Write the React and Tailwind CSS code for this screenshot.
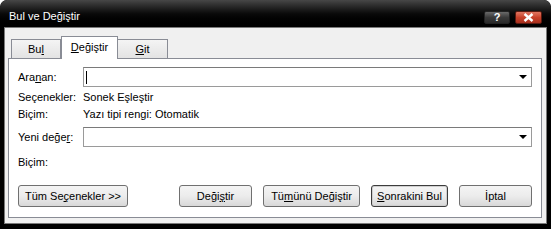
import React from "react";

function Btn({ children, className = "", def = false }) {
  return (
    <div
      className={
        "h-[22px] flex items-center justify-center rounded-[3px] text-[11px] text-black bg-gradient-to-b from-[#f4f4f4] via-[#ececec] to-[#d8d8d8] " +
        (def ? "border border-[#3c3c3c] shadow-[inset_0_0_0_1px_#cfcfcf] " : "border border-[#707070] ") +
        className
      }
    >
      {children}
    </div>
  );
}

function Combo({ cursor = false }) {
  return (
    <div className="flex-1 h-[20px] bg-white border border-[#9a9a9a] border-t-[#7a7a7a] flex items-center relative">
      {cursor && <div className="ml-[2px] w-[1px] h-[13px] bg-black" />}
      <div className="absolute right-[4px] top-[7px] w-0 h-0 border-l-[4px] border-r-[4px] border-t-[4px] border-l-transparent border-r-transparent border-t-black" />
    </div>
  );
}

export default function App() {
  return (
    <div className="w-[551px] h-[229px] bg-black rounded-t-[7px] flex flex-col overflow-hidden font-['Liberation_Sans',Arial,sans-serif] text-[11px] text-black">
      {/* title bar */}
      <div className="h-[27px] shrink-0 bg-gradient-to-b from-[#474747] via-[#0b0b0b] to-black rounded-t-[7px] flex items-start relative">
        <div className="text-white text-[11px] pl-[9px] pt-[9px] leading-[14px]">Bul ve Değiştir</div>
        <div className="ml-auto mt-[11px] mr-[9px] flex gap-[5px]">
          <div className="w-[26px] h-[13px] rounded-[2px] border border-[#222] bg-gradient-to-b from-[#6a6a6a] via-[#3a3a3a] to-[#2a2a2a] flex items-center justify-center text-white font-bold text-[11px] leading-none">?</div>
          <div className="w-[27px] h-[13px] rounded-[2px] border border-[#5a1a10] bg-gradient-to-b from-[#e07560] via-[#c8412a] to-[#a8301e] flex items-center justify-center">
            <svg width="11" height="9" viewBox="0 0 11 9">
              <path d="M1.5 1 L9.5 8 M9.5 1 L1.5 8" stroke="white" strokeWidth="2.4" />
            </svg>
          </div>
        </div>
      </div>
      {/* body */}
      <div className="mx-[4px] mb-[5px] flex-1 bg-[#f0f0f0] border border-[#7a7a7a] pl-[3px] pt-[7px] flex flex-col">
        {/* tabs */}
        <div className="flex items-end pl-[3px] h-[23px] relative z-10">
          <div className="w-[50px] h-[19px] border border-b-0 border-[#898c95] bg-gradient-to-b from-[#f4f4f4] to-[#e3e3e3] flex items-center justify-center pt-[1px]">
            <span>Bu<u>l</u></span>
          </div>
          <div className="w-[57px] h-[23px] -mb-[1px] border border-b-0 border-[#898c95] bg-white flex items-center justify-center pb-[2px]">
            <span><u>D</u>eğiştir</span>
          </div>
          <div className="w-[50px] h-[19px] border border-b-0 border-l-0 border-[#898c95] bg-gradient-to-b from-[#f4f4f4] to-[#e3e3e3] flex items-center justify-center pt-[1px]">
            <span><u>G</u>it</span>
          </div>
        </div>
        {/* panel */}
        <div className="w-[534px] h-[160px] bg-white border border-[#898c95] pl-[9px] pr-[9px] pt-[8px] flex flex-col">
          <div className="flex items-center h-[20px]">
            <div className="w-[65px]">Ara<u>n</u>an:</div>
            <Combo cursor />
          </div>
          <div className="flex items-center h-[16px] mt-[2px]">
            <div className="w-[65px]">Seçenekler:</div>
            <div>Sonek Eşleştir</div>
          </div>
          <div className="flex items-center h-[16px] mt-[1px]">
            <div className="w-[65px]">Biçim:</div>
            <div>Yazı tipi rengi: Otomatik</div>
          </div>
          <div className="flex items-center h-[20px] mt-[5px]">
            <div className="w-[65px]">Yeni değe<u>r</u>:</div>
            <Combo />
          </div>
          <div className="flex items-center h-[16px] mt-[7px]">
            <div className="w-[65px]">Biçim:</div>
          </div>
          <div className="flex items-center mt-[15px]">
            <Btn className="w-[110px]">Tüm Se<u>ç</u>enekler &gt;&gt;</Btn>
            <div className="ml-auto flex gap-[11px]">
              <Btn className="w-[73px]">Deği<u>ş</u>tir</Btn>
              <Btn className="w-[97px]">Tü<u>m</u>ünü Değiştir</Btn>
              <Btn className="w-[77px]" def><u>S</u>onrakini Bul</Btn>
              <Btn className="w-[73px]">İptal</Btn>
            </div>
          </div>
        </div>
      </div>
    </div>
  );
}
